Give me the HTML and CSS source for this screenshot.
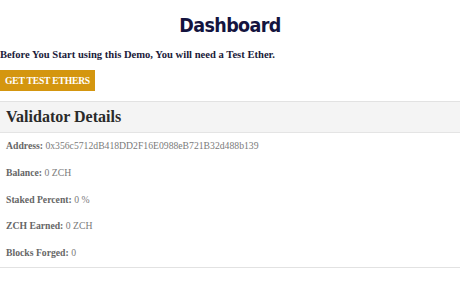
FILE: index.html
```html
<!DOCTYPE html>
<html>
<head>
<meta charset="utf-8">
<title>Dashboard</title>
<link rel="stylesheet" href="styles.css">
</head>
<body>
<div class="head">Dashboard</div>
<div class="intro">Before You Start using this Demo, You will need a Test Ether.</div>
<div class="actions"><a class="btn" href="#">Get Test Ethers</a></div>
<div class="card">
  <div class="card-head">Validator Details</div>
  <div class="card-body">
    <p><strong>Address:</strong> 0x356c5712dB418DD2F16E0988eB721B32d488b139</p>
    <p><strong>Balance:</strong> 0 ZCH</p>
    <p><strong>Staked Percent:</strong> 0 %</p>
    <p><strong>ZCH Earned:</strong> 0 ZCH</p>
    <p><strong>Blocks Forged:</strong> 0</p>
  </div>
</div>
</body>
</html>
```

FILE: styles.css
```css
*{box-sizing:border-box;}
body{margin:0;font-family:"Liberation Serif","DejaVu Serif",serif;color:#1b1b3a;background:#fff;}
a{text-decoration:none;}
.head{text-align:center;padding-top:14px;height:47px;font-family:"DejaVu Sans Condensed","DejaVu Sans",sans-serif;font-weight:bold;font-size:19.5px;letter-spacing:-0.6px;color:#14143f;}
.intro{font-size:10.6px;font-weight:bold;line-height:16px;height:23px;color:#1b1b3a;}
.actions{height:31px;}
.btn{display:inline-block;background:#d4960f;color:#fff;font-weight:bold;font-size:9.6px;letter-spacing:-0.2px;text-transform:uppercase;padding:0 5px;height:21px;line-height:21px;white-space:nowrap;}
.card{border-top:1px solid #e2e2e2;border-bottom:1px solid #e2e2e2;}
.card-head{background:#f4f4f4;border-bottom:1px solid #e4e4e4;height:31px;line-height:30px;padding-left:6px;font-size:16px;font-weight:bold;color:#2a2a2a;}
.card-body{padding:5px 6px 0;color:#7a7a7a;font-size:9.7px;}
.card-body p{margin:0;height:26.75px;line-height:16px;}
.card-body p:last-child{height:22px;}
.card-body strong{color:#666;}
```
